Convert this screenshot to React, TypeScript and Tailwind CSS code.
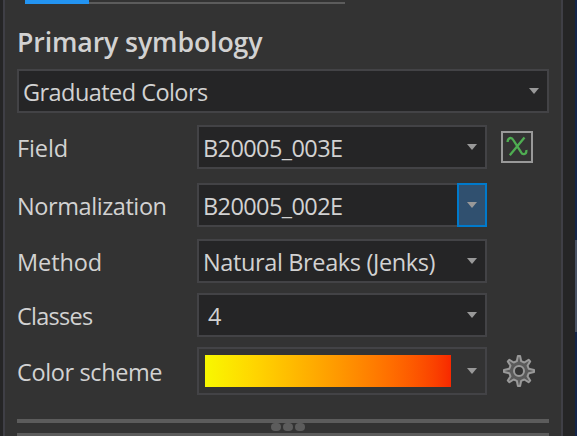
import type { ReactNode } from "react";

function Arrow() {
  return (
    <svg width="10" height="6" viewBox="0 0 10 6" className="block shrink-0">
      <path d="M0 0H10L5 6Z" fill="#999999" />
    </svg>
  );
}

function Combo({ children, className = "", active = false }: { children: ReactNode; className?: string; active?: boolean }) {
  return (
    <div className={`flex h-11 shrink-0 justify-between border-2 border-[#434346] bg-[#252526] pl-1 ${className}`}>
      <div className="flex items-center whitespace-nowrap pt-0.5">{children}</div>
      <div
        className={
          active
            ? "-my-0.5 -mr-0.5 flex w-[30px] items-center justify-center border-2 border-[#007acc] bg-[#30506f]"
            : "flex w-[26px] items-center justify-center"
        }
      >
        <Arrow />
      </div>
    </div>
  );
}

function Row({ label, tracking, children, className }: { label: string; tracking: string; children: ReactNode; className: string }) {
  return (
    <div className={`flex items-center ${className}`}>
      <div className={`w-[180px] shrink-0 whitespace-nowrap pt-0.5 ${tracking}`}>{label}</div>
      {children}
    </div>
  );
}

export default function App() {
  return (
    <div className="flex h-[436px] w-[577px] overflow-hidden bg-[#252526] pl-[3px] font-['Open_Sans',sans-serif] text-[23.5px] leading-8 text-[#d2d2d2]">
      <main className="w-[560px] shrink-0 border-x-2 border-[#3f3f46] bg-[#333333] px-3">
        <div className="ml-2 flex h-1 w-80 items-end">
          <div className="h-1 w-16 bg-[#2394f2]" />
          <div className="h-0.5 flex-1 bg-[#5c5c5c]" />
        </div>
        <h1 className="mt-[20px] h-[45px] whitespace-nowrap text-[26.7px] font-semibold leading-9 tracking-[-0.12px]">Primary symbology</h1>
        <Combo className="w-[532px]"><span className="tracking-[-0.55px]">Graduated Colors</span></Combo>

        <Row label="Field" tracking="tracking-[-0.1px]" className="mt-3">
          <Combo className="w-[290px]"><span className="tracking-[-0.6px]">B20005_003E</span></Combo>
          <div className="ml-3.5 flex size-8 items-center justify-center border-2 border-[#999999]">
            <svg width="28" height="28" viewBox="0 0 28 28" fill="none" stroke="#4fad52" strokeWidth="2.3" className="shrink-0">
              <path d="M4.6 9C4.8 4.6 8.4 3.8 10.3 7L18 19.2C19.8 22.5 23.8 21.5 23.3 17M21.5 4.5L6.8 22.2" />
            </svg>
          </div>
        </Row>
        <Row label="Normalization" tracking="tracking-[-0.42px]" className="mt-3.5">
          <Combo className="w-[290px]" active><span className="tracking-[-0.6px]">B20005_002E</span></Combo>
        </Row>
        <Row label="Method" tracking="tracking-[-0.1px]" className="mt-3">
          <Combo className="w-[290px]"><span className="tracking-[-0.37px]">Natural Breaks (Jenks)</span></Combo>
        </Row>
        <Row label="Classes" tracking="tracking-[-0.75px]" className="mt-2.5">
          <Combo className="w-[290px]"><span className="pl-[5px]">4</span></Combo>
        </Row>
        <Row label="Color scheme" tracking="tracking-[-0.38px]" className="mt-2.5">
          <div className="flex h-12 w-[290px] items-center justify-between border-2 border-[#434346] pl-1.5">
            <div className="h-8 w-[246px] bg-linear-to-r from-[#f8f800] to-[#f82800]" />
            <div className="flex w-[26px] justify-center"><Arrow /></div>
          </div>
          <svg width="32" height="32" viewBox="0 0 32 32" className="ml-4 shrink-0">
            <g fill="#5a5a5a" stroke="#999999" strokeWidth="2" strokeLinejoin="round">
              <path d="M14.9 1H17.1L18.2 6.2L21.3 7.5L25.6 4.8L27.2 6.4L24.5 10.7L25.8 13.8L31 14.9V17.1L25.8 18.2L24.5 21.3L27.2 25.6L25.6 27.2L21.3 24.5L18.2 25.8L17.1 31H14.9L13.8 25.8L10.7 24.5L6.4 27.2L4.8 25.6L7.5 21.3L6.2 18.2L1 17.1V14.9L6.2 13.8L7.5 10.7L4.8 6.4L6.4 4.8L10.7 7.5L13.8 6.2Z" />
              <circle cx="16" cy="16" r="5" fill="#333333" />
            </g>
          </svg>
        </Row>
        <div className="mt-6 h-1 bg-[#5c5c5c]" />
        <div className="flex h-2.5 justify-center gap-0.5 pl-[10px]">
          <span className="h-2 w-2.5 rounded-full bg-[#5c5c5c]" />
          <span className="h-2 w-2.5 rounded-full bg-[#5c5c5c]" />
          <span className="h-2 w-2.5 rounded-full bg-[#5c5c5c]" />
        </div>
        <div className="h-[3px] bg-[#5c5c5c]" />
      </main>
      <div className="ml-3 w-0.5 shrink-0">
        <div className="h-60 bg-[#14264a]" />
        <div className="h-[92px] bg-[#485266]" />
        <div className="h-[104px] bg-[#14264a]" />
      </div>
    </div>
  );
}
